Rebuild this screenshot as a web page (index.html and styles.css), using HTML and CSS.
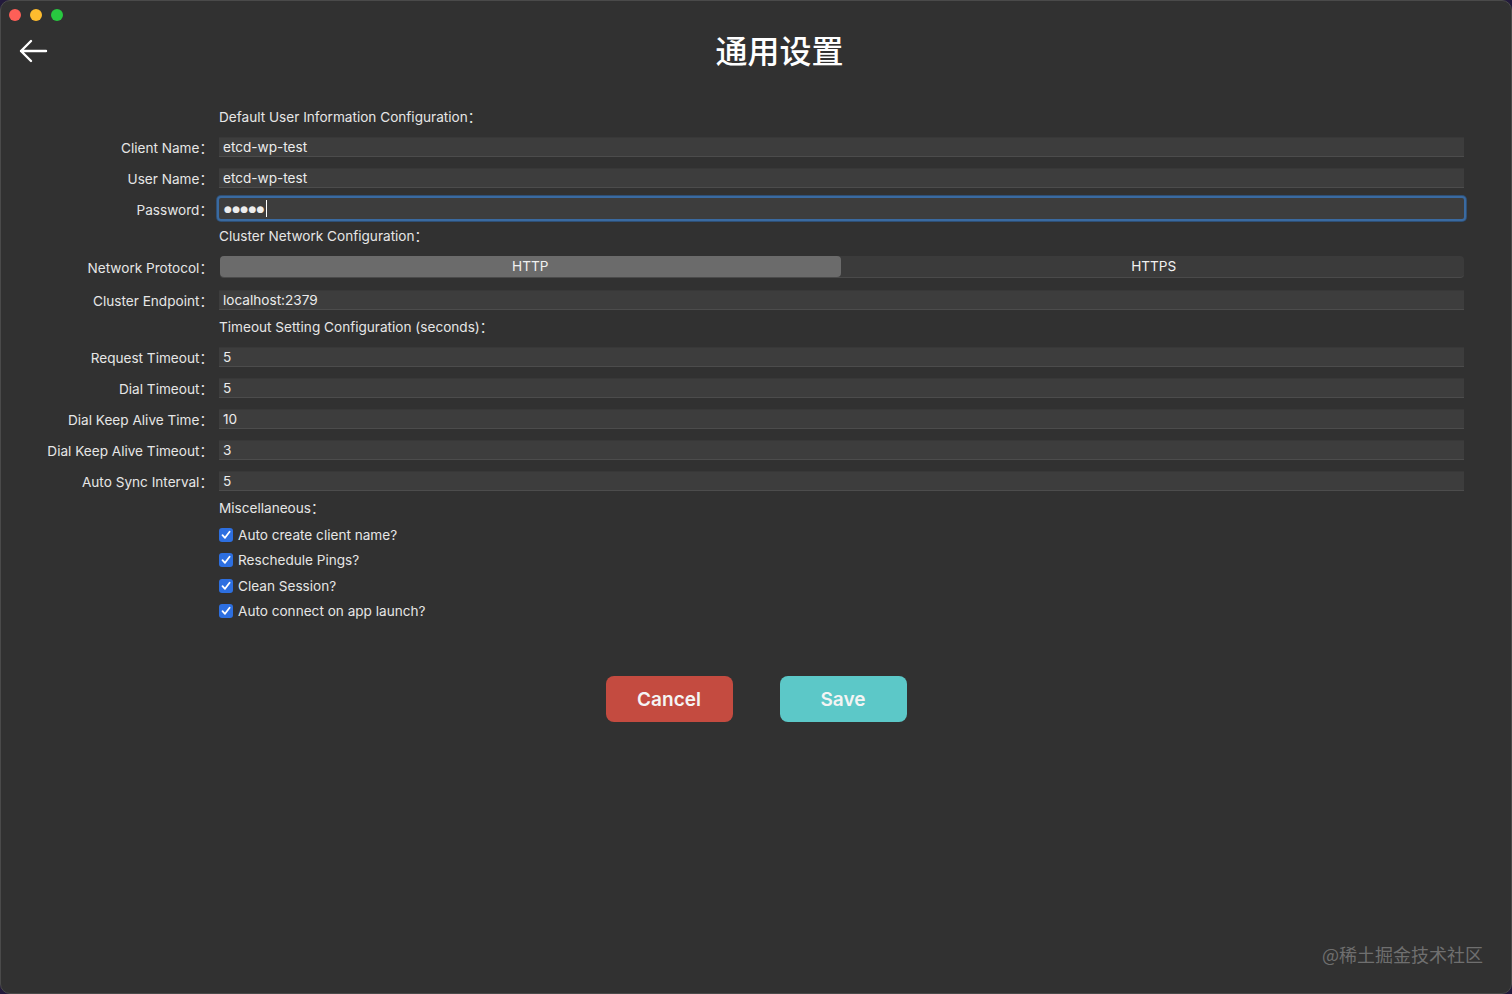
FILE: index.html
```html
<!DOCTYPE html>
<html lang="zh-CN">
  <head>
    <meta charset="UTF-8" />
    <meta name="viewport" content="width=device-width, initial-scale=1.0" />
    <title>通用设置</title>
    <link rel="stylesheet" href="styles.css">
  </head>
  <body>
    <div class="window">
      <div class="titlebar">
        <span class="light red"></span>
        <span class="light yellow"></span>
        <span class="light green"></span>
      </div>

      <div class="header">
        <div class="back">
          <svg width="30" height="24" viewBox="0 0 30 24">
            <path d="M28 12 H3 M13 2 L3 12 L13 22" fill="none" stroke="#fff" stroke-width="2.4" stroke-linecap="round" stroke-linejoin="round"/>
          </svg>
        </div>
        <h1 class="title">通用设置</h1>
      </div>

      <div class="form">
        <div class="section"><span></span><span>Default User Information Configuration：</span></div>
        <div class="row"><label>Client Name：</label><div class="field">etcd-wp-test</div></div>
        <div class="row"><label>User Name：</label><div class="field">etcd-wp-test</div></div>
        <div class="row"><label>Password：</label><div class="field focused"><span class="dots">●●●●●</span><span class="caret"></span></div></div>

        <div class="section"><span></span><span>Cluster Network Configuration：</span></div>
        <div class="row tall">
          <label>Network Protocol：</label>
          <div class="segmented">
            <div class="seg selected">HTTP</div>
            <div class="seg">HTTPS</div>
          </div>
        </div>
        <div class="row"><label>Cluster Endpoint：</label><div class="field">localhost:2379</div></div>

        <div class="section"><span></span><span>Timeout Setting Configuration (seconds)：</span></div>
        <div class="row"><label>Request Timeout：</label><div class="field">5</div></div>
        <div class="row"><label>Dial Timeout：</label><div class="field">5</div></div>
        <div class="row"><label>Dial Keep Alive Time：</label><div class="field">10</div></div>
        <div class="row"><label>Dial Keep Alive Timeout：</label><div class="field">3</div></div>
        <div class="row"><label>Auto Sync Interval：</label><div class="field">5</div></div>

        <div class="section"><span></span><span>Miscellaneous：</span></div>
        <div class="check-row"><span></span><div class="check"><span class="box"><svg width="10" height="10" viewBox="0 0 10 10"><path d="M1.5 5.2 L4 7.8 L8.6 1.8" fill="none" stroke="#fff" stroke-width="1.8" stroke-linecap="round" stroke-linejoin="round"/></svg></span>Auto create client name?</div></div>
        <div class="check-row"><span></span><div class="check"><span class="box"><svg width="10" height="10" viewBox="0 0 10 10"><path d="M1.5 5.2 L4 7.8 L8.6 1.8" fill="none" stroke="#fff" stroke-width="1.8" stroke-linecap="round" stroke-linejoin="round"/></svg></span>Reschedule Pings?</div></div>
        <div class="check-row"><span></span><div class="check"><span class="box"><svg width="10" height="10" viewBox="0 0 10 10"><path d="M1.5 5.2 L4 7.8 L8.6 1.8" fill="none" stroke="#fff" stroke-width="1.8" stroke-linecap="round" stroke-linejoin="round"/></svg></span>Clean Session?</div></div>
        <div class="check-row"><span></span><div class="check"><span class="box"><svg width="10" height="10" viewBox="0 0 10 10"><path d="M1.5 5.2 L4 7.8 L8.6 1.8" fill="none" stroke="#fff" stroke-width="1.8" stroke-linecap="round" stroke-linejoin="round"/></svg></span>Auto connect on app launch?</div></div>
      </div>

      <div class="actions">
        <button class="btn cancel">Cancel</button>
        <button class="btn save">Save</button>
      </div>

      <div class="watermark">@稀土掘金技术社区</div>
    </div>
  </body>
</html>
```

FILE: styles.css
```css
html,
body {
  margin: 0;
  padding: 0;
  height: 100%;
}
body {
  background-color: #231a3c;
  font-family: "Inter", "Noto Sans CJK SC", sans-serif;
  font-size: 13.6px;
  color: #e6e6e6;
}
.window {
  position: relative;
  box-sizing: border-box;
  height: 994px;
  background-color: #313131;
  border: 1px solid #4a4a4a;
  border-radius: 10px;
  overflow: hidden;
}
.titlebar {
  display: flex;
  gap: 9px;
  padding: 8px 0 0 8px;
  height: 22px;
  box-sizing: border-box;
}
.light {
  width: 12px;
  height: 12px;
  border-radius: 50%;
}
.red {
  background-color: #fe5f57;
}
.yellow {
  background-color: #febc2e;
}
.green {
  background-color: #28c840;
}
.header {
  display: flex;
  align-items: center;
  height: 52px;
}
.back {
  width: 48px;
  display: flex;
  justify-content: flex-end;
  margin-left: -1px;
  padding-top: 4px;
}
.title {
  flex: 1;
  margin: 0;
  text-align: center;
  font-family: "Noto Sans CJK SC", sans-serif;
  font-size: 32px;
  font-weight: 500;
  color: #fff;
}
.form {
  margin-top: 30px;
  padding-right: 47px;
}
.row,
.section,
.check-row {
  display: grid;
  grid-template-columns: 212px 1fr;
  column-gap: 6px;
  align-items: center;
}
.row {
  height: 31px;
}
.row.tall {
  height: 34px;
}
.section {
  height: 26px;
  align-items: start;
  padding-top: 2px;
  box-sizing: border-box;
  line-height: 20px;
}
.check-row {
  height: 25.5px;
}
label {
  text-align: right;
  white-space: nowrap;
}
.field {
  height: 20px;
  line-height: 20px;
  padding-left: 4px;
  background-color: #3d3d3d;
  border-top: 1px solid #383838;
  border-bottom: 1px solid #4c4c4c;
  box-sizing: border-box;
  color: #ececec;
  display: flex;
  align-items: center;
}
.field.focused {
  height: 21px;
  border: none;
  border-radius: 2px;
  box-shadow: 0 0 0 2px #3a6aa0, 0 0 0 3px #2e4f75;
}
.dots {
  font-family: "DejaVu Sans", sans-serif;
  font-size: 9px;
  letter-spacing: 0.3px;
  padding-left: 1px;
}
.caret {
  display: inline-block;
  width: 1px;
  height: 17px;
  background-color: #fff;
  margin-left: 1px;
}
.segmented {
  display: flex;
  height: 22px;
  background-color: #3b3b3b;
  border-bottom: 1px solid #4a4a4a;
  box-sizing: border-box;
  border-radius: 4px;
  margin-left: 1px;
}
.seg {
  flex: 1;
  text-align: center;
  line-height: 21px;
  color: #f0f0f0;
}
.seg.selected {
  background-color: #6b6b6b;
  border-radius: 4px;
  margin-right: 3px;
}
.check {
  display: flex;
  align-items: center;
  gap: 5px;
}
.box {
  width: 14px;
  height: 14px;
  border-radius: 3px;
  background-color: #2d6fe0;
  display: flex;
  align-items: center;
  justify-content: center;
}
.actions {
  display: flex;
  justify-content: center;
  gap: 47px;
  margin-top: 52px;
}
.btn {
  width: 127px;
  height: 46px;
  border: none;
  border-radius: 8px;
  font-family: "Inter", sans-serif;
  font-size: 19px;
  font-weight: 600;
  color: #f4f4f4;
  cursor: pointer;
}
.cancel {
  background-color: #c44b40;
}
.save {
  background-color: #5cc8c8;
}
.watermark {
  position: absolute;
  right: 28px;
  bottom: 26px;
  font-family: "Noto Sans CJK SC", sans-serif;
  font-size: 18px;
  color: #6f6f6f;
}
```
